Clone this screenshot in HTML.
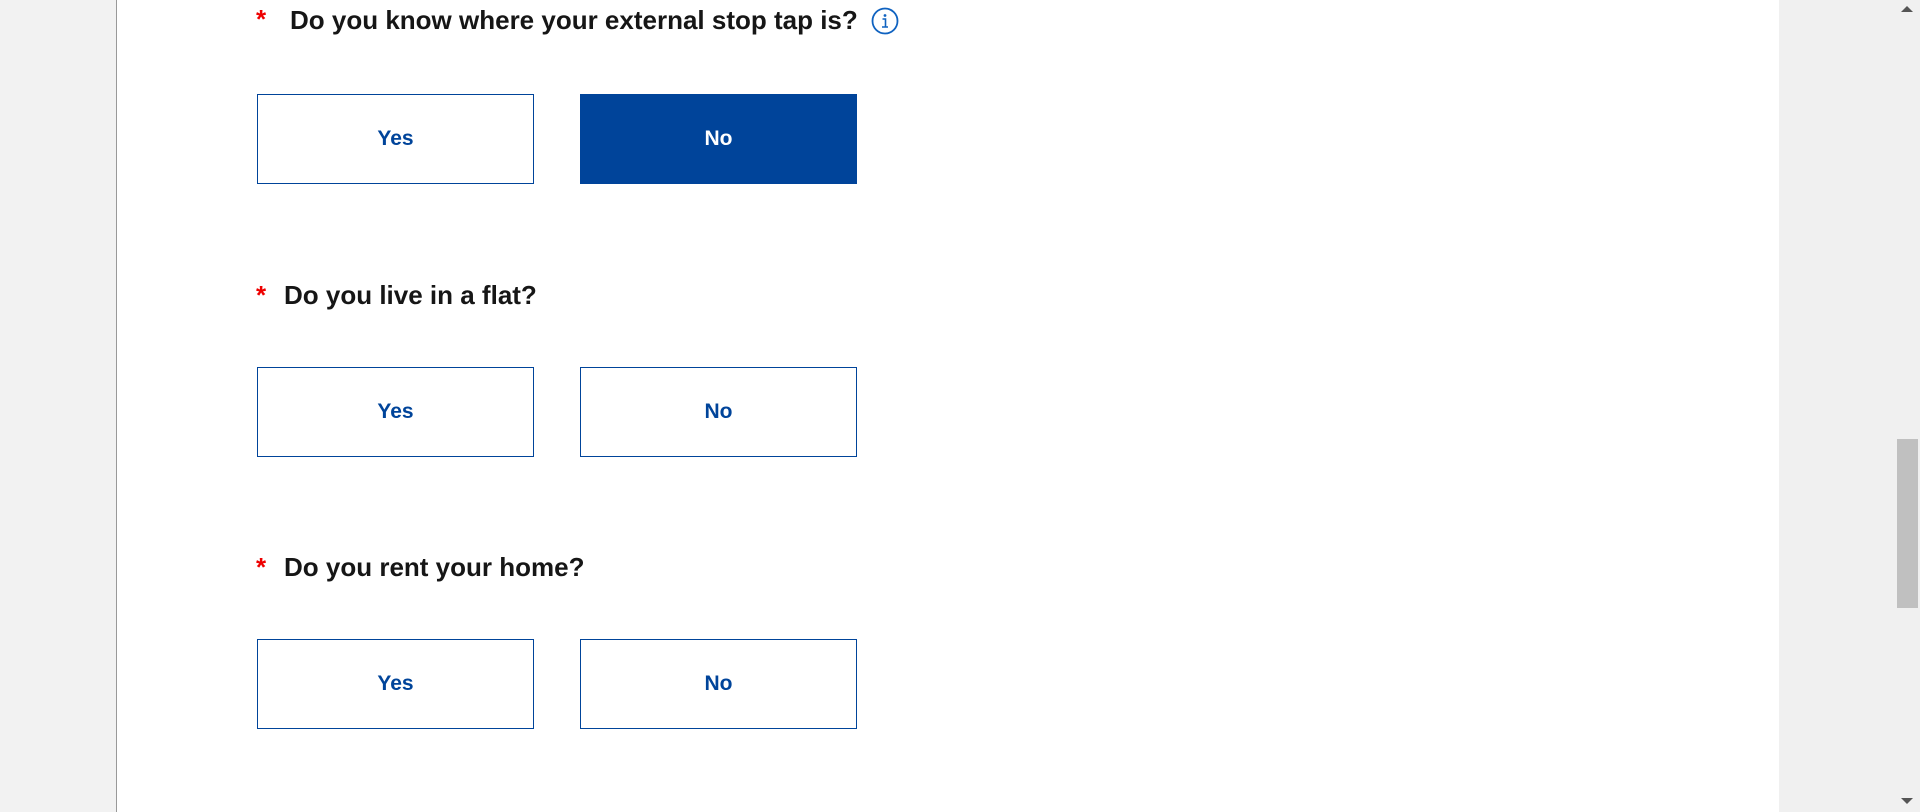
<!DOCTYPE html>
<html><head><meta charset="utf-8"><style>
html,body{margin:0;padding:0;width:1920px;height:812px;overflow:hidden;background:#f2f2f2;font-family:"Liberation Sans",sans-serif}
.page{position:absolute;left:116px;top:0;width:1662px;height:812px;background:#fff;border-left:1px solid #999;border-right:1px solid #999}
.q{position:absolute;font-weight:bold;font-size:26px;color:#161616;white-space:nowrap;letter-spacing:0}
.ast{position:absolute;color:#e00;font-size:26px;font-weight:bold}
.b{position:absolute;width:275px;height:88px;border:1px solid #00449a;background:#fff;color:#00449a;font-weight:bold;font-size:21px;display:flex;align-items:center;justify-content:center;box-sizing:content-box}
.b.on{background:#00449a;color:#fff}
.sb{position:absolute;left:1779px;top:0;width:141px;height:812px;background:#f0f0f0}
</style></head><body>
<div class="page"></div>
<div class="ast" style="left:256px;top:4px">*</div>
<div class="q" style="left:290px;top:5px">Do you know where your external stop tap is?</div>
<svg style="position:absolute;left:871px;top:7px" width="28" height="28" viewBox="0 0 28 28"><circle cx="14" cy="14" r="12.5" fill="none" stroke="#0f62c0" stroke-width="1.8"/><circle cx="14" cy="8.5" r="1.4" fill="#0f62c0"/><path d="M11.5 12h3v8M11 20h6" fill="none" stroke="#0f62c0" stroke-width="1.6"/></svg>
<div class="b" style="left:257px;top:94px">Yes</div>
<div class="b on" style="left:580px;top:94px">No</div>

<div class="ast" style="left:256px;top:280px">*</div>
<div class="q" style="left:284px;top:280px">Do you live in a flat?</div>
<div class="b" style="left:257px;top:367px">Yes</div>
<div class="b" style="left:580px;top:367px">No</div>

<div class="ast" style="left:256px;top:552px">*</div>
<div class="q" style="left:284px;top:552px">Do you rent your home?</div>
<div class="b" style="left:257px;top:639px">Yes</div>
<div class="b" style="left:580px;top:639px">No</div>

<div class="sb">
<svg style="position:absolute;left:122px;top:5px" width="12" height="8"><path d="M0 7L6 1L12 7Z" fill="#555"/></svg>
<div style="position:absolute;left:118px;top:439px;width:21px;height:169px;background:#c0c0c0"></div>
<svg style="position:absolute;left:122px;top:797px" width="12" height="8"><path d="M0 1L6 7L12 1Z" fill="#555"/></svg>
</div>
</body></html>
